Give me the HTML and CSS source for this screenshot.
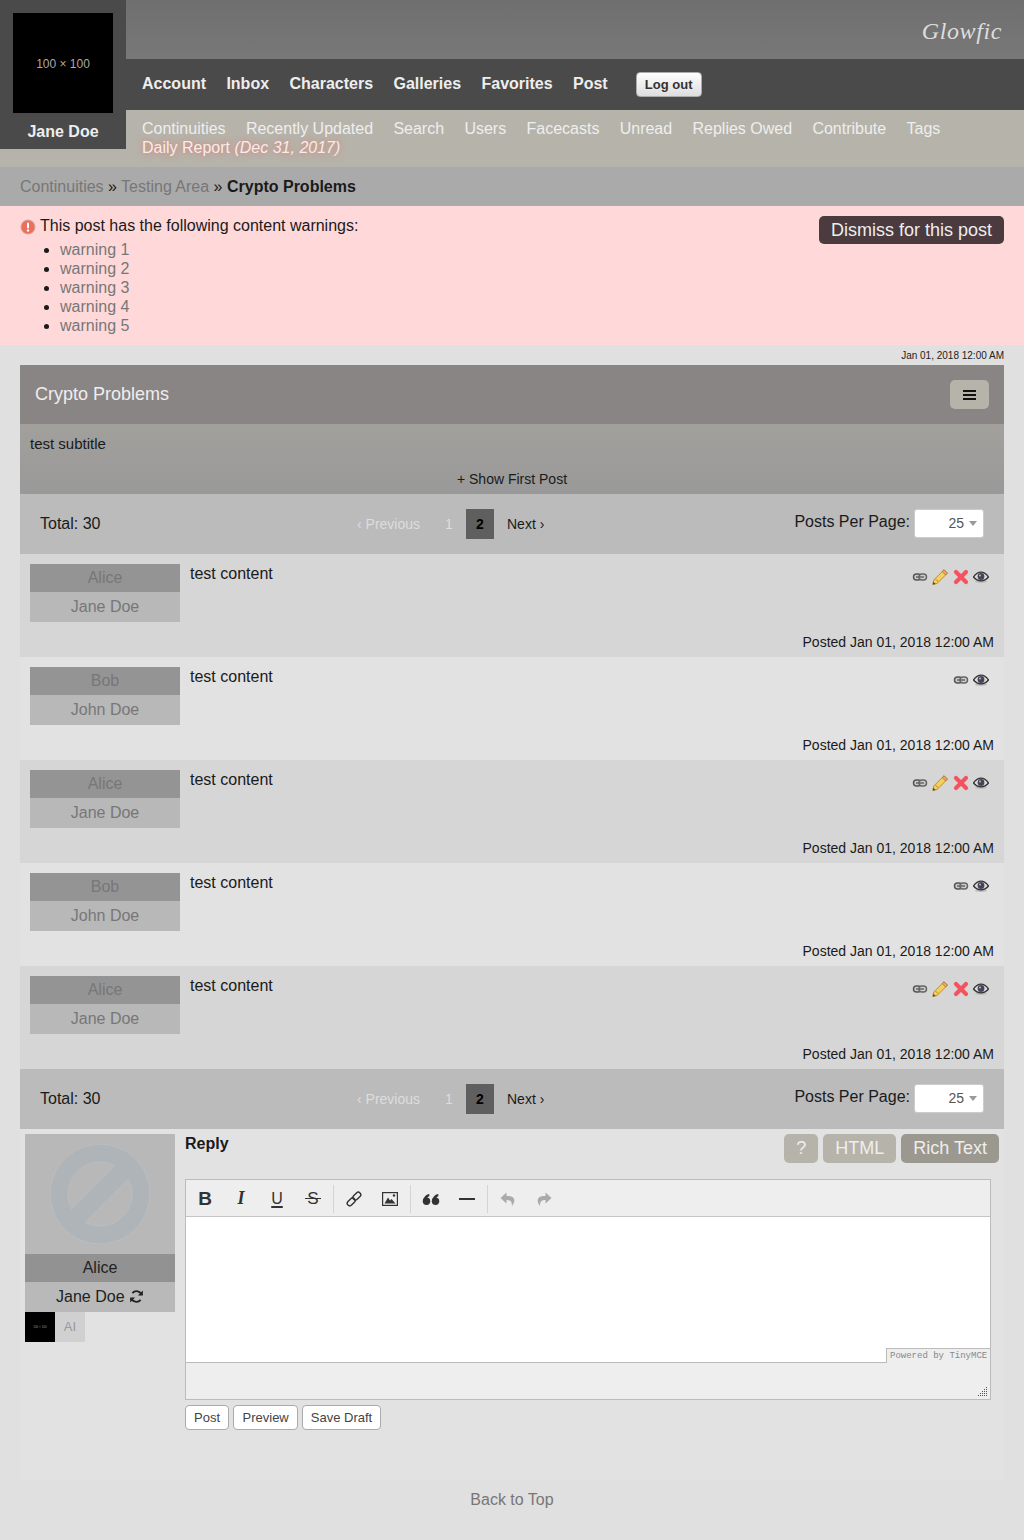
FILE: index.html
```html
<!DOCTYPE html>
<html lang="en">
<head>
<meta charset="utf-8">
<title>Crypto Problems</title>
<link rel="stylesheet" href="styles.css">
</head>
<body>
<svg class="defs" width="0" height="0" aria-hidden="true">
  <symbol id="i-link" viewBox="0 0 16 16">
    <rect x="1.500" y="5" width="7.500" height="6" rx="3" fill="#ccc" stroke="#555" stroke-width="1.500"/>
    <rect x="7" y="5" width="7.500" height="6" rx="3" fill="#ccc" stroke="#666" stroke-width="1.500"/>
    <path d="M4 8h8" stroke="#666" stroke-width="1.500"/>
  </symbol>
  <symbol id="i-pencil" viewBox="0 0 16 16">
    <path d="M12 .8 15.400 4.200 5 14.500 .8 15.500 1.800 11Z" fill="#f4d060" stroke="#b8862a" stroke-width=".9"/>
    <path d="M3.500 10 6.500 13" stroke="#e5a030" stroke-width="1.200"/>
    <path d="M12 .8 15.400 4.200 13.600 6 10.200 2.600Z" fill="#e8a878" stroke="#a8702a" stroke-width=".8"/>
    <path d="M.8 15.500 1.400 12.700 3.600 14.900Z" fill="#444"/>
  </symbol>
  <symbol id="i-x" viewBox="0 0 16 16">
    <path d="M3 3 13 13M13 3 3 13" stroke="#f4525f" stroke-width="4.200" stroke-linecap="round"/>
  </symbol>
  <symbol id="i-eye" viewBox="0 0 16 16">
    <ellipse cx="8" cy="12.500" rx="6" ry="1.500" fill="#bbb"/>
    <path d="M.5 8C3 4.500 5.500 3.200 8 3.200S13 4.500 15.500 8C13 11 10.500 11.800 8 11.800S3 11 .5 8Z" fill="#ddd" stroke="#333" stroke-width="1.300"/>
    <circle cx="8" cy="7.500" r="3.400" fill="#44445a"/>
    <circle cx="7" cy="6.500" r="1" fill="#bbb"/>
  </symbol>
</svg>

<header class="site-head">
  <div class="user-box">
    <div class="avatar">100 × 100</div>
    <div class="user-name">Jane Doe</div>
  </div>
  <div class="top-bar"><span class="logo">Glowfic</span></div>
  <nav class="main-nav">
    <a>Account</a><a>Inbox</a><a>Characters</a><a>Galleries</a><a>Favorites</a><a>Post</a>
    <button class="logout">Log out</button>
  </nav>
  <nav class="sub-nav">
    <a>Continuities</a><a>Recently Updated</a><a>Search</a><a>Users</a><a>Facecasts</a><a>Unread</a><a>Replies Owed</a><a>Contribute</a><a>Tags</a>
    <a class="daily">Daily Report <em>(Dec 31, 2017)</em></a>
  </nav>
</header>

<div class="crumbs"><a>Continuities</a> » <a>Testing Area</a> » <b>Crypto Problems</b></div>

<section class="warning">
  <div>
    <div class="warn-head">
      <svg class="warn-icon" viewBox="0 0 16 16" width="16" height="16"><circle cx="8" cy="8" r="7" fill="#e8705c" stroke="#dba08f" stroke-width="1"/><rect x="7" y="3.500" width="2" height="6" rx="1" fill="#fff"/><circle cx="8" cy="11.500" r="1.200" fill="#fff"/></svg>
      This post has the following content warnings:
    </div>
    <ul class="warn-list">
      <li><a>warning 1</a></li><li><a>warning 2</a></li><li><a>warning 3</a></li><li><a>warning 4</a></li><li><a>warning 5</a></li>
    </ul>
  </div>
  <button class="dismiss">Dismiss for this post</button>
</section>

<main class="content">
  <div class="stamp">Jan 01, 2018 12:00 AM</div>
  <div class="title-bar">
    <span class="title">Crypto Problems</span>
    <button class="menu-btn" aria-label="Menu"><span></span><span></span><span></span></button>
  </div>
  <div class="subtitle-block">
    <div class="subtitle">test subtitle</div>
    <div class="show-first">+ Show First Post</div>
  </div>

  <div class="pager">
    <span class="total">Total: 30</span>
    <div class="pages"><a class="off prev">‹ Previous</a><a class="off one">1</a><b class="cur">2</b><a class="next">Next ›</a></div>
    <div class="ppp">Posts Per Page: <div class="sel">25<i></i></div></div>
  </div>

  <article class="post odd">
    <div class="who"><div class="char">Alice</div><div class="author">Jane Doe</div></div>
    <div class="body">
      <div class="line"><span>test content</span><div class="acts">
        <svg><use href="#i-link"/></svg><svg><use href="#i-pencil"/></svg><svg><use href="#i-x"/></svg><svg><use href="#i-eye"/></svg></div></div>
      <div class="posted">Posted Jan 01, 2018 12:00 AM</div>
    </div>
  </article>
  <article class="post even">
    <div class="who"><div class="char">Bob</div><div class="author">John Doe</div></div>
    <div class="body">
      <div class="line"><span>test content</span><div class="acts">
        <svg><use href="#i-link"/></svg><svg><use href="#i-eye"/></svg></div></div>
      <div class="posted">Posted Jan 01, 2018 12:00 AM</div>
    </div>
  </article>
  <article class="post odd">
    <div class="who"><div class="char">Alice</div><div class="author">Jane Doe</div></div>
    <div class="body">
      <div class="line"><span>test content</span><div class="acts">
        <svg><use href="#i-link"/></svg><svg><use href="#i-pencil"/></svg><svg><use href="#i-x"/></svg><svg><use href="#i-eye"/></svg></div></div>
      <div class="posted">Posted Jan 01, 2018 12:00 AM</div>
    </div>
  </article>
  <article class="post even">
    <div class="who"><div class="char">Bob</div><div class="author">John Doe</div></div>
    <div class="body">
      <div class="line"><span>test content</span><div class="acts">
        <svg><use href="#i-link"/></svg><svg><use href="#i-eye"/></svg></div></div>
      <div class="posted">Posted Jan 01, 2018 12:00 AM</div>
    </div>
  </article>
  <article class="post odd">
    <div class="who"><div class="char">Alice</div><div class="author">Jane Doe</div></div>
    <div class="body">
      <div class="line"><span>test content</span><div class="acts">
        <svg><use href="#i-link"/></svg><svg><use href="#i-pencil"/></svg><svg><use href="#i-x"/></svg><svg><use href="#i-eye"/></svg></div></div>
      <div class="posted">Posted Jan 01, 2018 12:00 AM</div>
    </div>
  </article>

  <div class="pager">
    <span class="total">Total: 30</span>
    <div class="pages"><a class="off prev">‹ Previous</a><a class="off one">1</a><b class="cur">2</b><a class="next">Next ›</a></div>
    <div class="ppp">Posts Per Page: <div class="sel">25<i></i></div></div>
  </div>

  <section class="reply">
    <div class="reply-who">
      <div class="no-icon">
        <svg viewBox="0 0 100 100" width="100" height="100">
          <path fill-rule="evenodd" fill="#afb4b8" stroke="#c8ccd0" stroke-width=".6" stroke-dasharray="1 1" d="M99.700 50A49.700 49.700 0 1 1 .3 50 49.700 49.700 0 1 1 99.700 50ZM78.320 35.120A32 32 0 0 1 35.120 78.320ZM21.680 64.880A32 32 0 0 1 64.880 21.680Z"/>
        </svg>
      </div>
      <div class="reply-char">Alice</div>
      <div class="reply-author">Jane Doe
        <svg class="swap" viewBox="0 0 16 16" width="15" height="15"><path d="M13.500 6.500A5.700 5.700 0 0 0 3.600 4.400M2.500 9.500A5.700 5.700 0 0 0 12.400 11.600" fill="none" stroke="#222" stroke-width="1.900"/><path d="M14.800 1.500V7H9.500ZM1.200 14.500V9H6.500Z" fill="#222"/></svg>
      </div>
      <div class="recent"><div class="thumb">100 × 100</div><div class="ai">AI</div></div>
    </div>
    <div class="reply-main">
      <div class="reply-top">
        <b class="reply-label">Reply</b>
        <div class="modes"><button class="mode">?</button><button class="mode">HTML</button><button class="mode active">Rich Text</button></div>
      </div>
      <div class="editor">
        <div class="toolbar">
          <div class="tgroup">
            <span class="tb t-b">B</span><span class="tb t-i">I</span><span class="tb t-u">U</span><span class="tb t-s">S</span>
          </div>
          <i class="sep"></i>
          <div class="tgroup">
            <span class="tb"><svg viewBox="0 0 16 16" width="16" height="16"><g fill="none" stroke="#333" stroke-width="1.400" transform="rotate(-45 8 8)"><rect x="-.5" y="5.500" width="9" height="5" rx="2.500"/><rect x="7.500" y="5.500" width="9" height="5" rx="2.500"/></g></svg></span>
            <span class="tb"><svg viewBox="0 0 16 16" width="16" height="16"><rect x=".6" y="1.600" width="14.800" height="12.800" fill="none" stroke="#333" stroke-width="1.200"/><path d="M2.500 12.500 6 6.500 8 9.500 9.500 8 13.500 12.500Z" fill="#333"/><circle cx="12" cy="4.500" r="1.200" fill="#333"/></svg></span>
          </div>
          <i class="sep"></i>
          <div class="tgroup">
            <span class="tb"><svg viewBox="0 0 16 16" width="18" height="18"><g fill="#333"><circle cx="4" cy="10" r="3.300"/><circle cx="12" cy="10" r="3.300"/><path d="M1 10C1 6.500 3.500 4 6.500 3.500V5.500C5 6 4.200 7.500 4 9ZM9 10C9 6.500 11.500 4 14.500 3.500V5.500C13 6 12.200 7.500 12 9Z"/></g></svg></span>
            <span class="tb"><svg viewBox="0 0 16 16" width="16" height="16"><rect x="0" y="7" width="16" height="2" fill="#333"/></svg></span>
          </div>
          <i class="sep"></i>
          <div class="tgroup">
            <span class="tb"><svg viewBox="0 0 16 16" width="16" height="16"><path d="M6.500 1.500 .5 7l6 5.500V9c4 0 5.500 1.500 5.500 6 2.500-3 3-6 1.500-8C12.500 5.500 10 5 6.500 5Z" fill="#aaa"/></svg></span>
            <span class="tb"><svg viewBox="0 0 16 16" width="16" height="16"><path d="M9.500 1.500 15.500 7l-6 5.500V9c-4 0-5.500 1.500-5.500 6-2.500-3-3-6-1.500-8C3.500 5.500 6 5 9.500 5Z" fill="#aaa"/></svg></span>
          </div>
        </div>
        <div class="edit-area"><span class="powered">Powered by TinyMCE</span></div>
        <div class="status">
          <svg class="grip" viewBox="0 0 10 10" width="10" height="10"><g fill="#555"><rect x="8" y="0" width="1" height="1"/><rect x="6" y="2" width="1" height="1"/><rect x="8" y="2" width="1" height="1"/><rect x="4" y="4" width="1" height="1"/><rect x="6" y="4" width="1" height="1"/><rect x="8" y="4" width="1" height="1"/><rect x="2" y="6" width="1" height="1"/><rect x="4" y="6" width="1" height="1"/><rect x="6" y="6" width="1" height="1"/><rect x="8" y="6" width="1" height="1"/><rect x="0" y="8" width="1" height="1"/><rect x="2" y="8" width="1" height="1"/><rect x="4" y="8" width="1" height="1"/><rect x="6" y="8" width="1" height="1"/><rect x="8" y="8" width="1" height="1"/></g></svg>
        </div>
      </div>
      <div class="actions"><button class="act">Post</button><button class="act wide">Preview</button><button class="act tight">Save Draft</button></div>
    </div>
  </section>
</main>

<footer class="back"><a>Back to Top</a></footer>
</body>
</html>
```

FILE: styles.css
```css
* { box-sizing: border-box; }
html, body { margin: 0; padding: 0; }
body { background: #e0e0e0; font-family: "Liberation Sans", Arial, sans-serif; font-size: 16px; color: #1a1a1a; height: 1540px; overflow: hidden; }
.defs { position: absolute; }
button { font-family: inherit; cursor: pointer; }

.site-head { position: relative; }
.user-box { position: absolute; left: 0; top: 0; width: 126px; height: 149px; background: #4a4a4a; }
.avatar { width: 100px; height: 100px; margin: 13px 0 0 13px; padding-top: 2px; background: #000; color: #aaa; font-size: 12px; display: flex; align-items: center; justify-content: center; }
.user-name { color: #eee; font-weight: bold; text-align: center; margin-top: 10px; line-height: 18px; }
.top-bar { height: 59px; background: linear-gradient(#6f6f6f, #787878); display: flex; justify-content: flex-end; align-items: center; padding: 3px 22px 0 0; }
.logo { font-family: "Liberation Serif", serif; font-style: italic; font-size: 24px; color: #ddd; line-height: 30px; letter-spacing: .6px; }
.main-nav { height: 51px; background: #4a4a4a; padding-left: 142px; display: flex; align-items: center; gap: 20.4px; color: #eee; font-weight: bold; }
.main-nav a { position: relative; top: -1px; }
.logout { margin-left: 7.6px; width: 66px; height: 25px; padding: 0; border: 1px solid #aaa; border-radius: 4px; background: linear-gradient(#fff, #ddd); color: #333; font-size: 13px; font-weight: bold; }
.sub-nav { height: 57px; background: #b6b3aa; padding: 9px 0 0 142px; display: flex; flex-wrap: wrap; column-gap: 20.3px; align-content: flex-start; color: #eee; line-height: 19px; }
.daily { text-shadow: 0 0 6px #e8736a; color: #f6ece8; }
.crumbs { height: 39px; background: #aaa; padding-left: 20px; line-height: 39px; }
.crumbs a { color: #777; }
.warning { height: 139px; background: #ffd9d9; padding: 10px 20px 0; display: flex; justify-content: space-between; align-items: flex-start; }
.warn-head { display: flex; align-items: center; gap: 4px; line-height: 19px; margin-bottom: 5px; }
.warn-icon { flex: none; position: relative; top: 1px; }
.warn-list { margin: 0; padding: 0 0 0 40px; line-height: 19px; }
.warn-list a { color: #777; }
.dismiss { width: 185px; height: 28px; padding: 0; border: 0; border-radius: 5px; background: #4b3a3e; color: #eee; font-size: 18px; }

.content { margin: 0 20px; }
.stamp { height: 20px; text-align: right; font-size: 10px; line-height: 22px; color: #222; }
.title-bar { height: 59px; background: #8a8585; display: flex; align-items: center; justify-content: space-between; padding: 0 15px; }
.title { font-size: 18px; color: #eee; }
.menu-btn { width: 39px; height: 29px; padding: 0; border: 0; border-radius: 5px; background: #b6b3aa; display: flex; flex-direction: column; align-items: center; justify-content: center; gap: 2px; }
.menu-btn span { width: 13px; height: 2px; background: #111; }
.subtitle-block { height: 70px; background: linear-gradient(#a2a09c, #999); font-size: 14px; }
.subtitle { padding: 12px 0 0 10px; line-height: 16px; font-size: 15px; }
.show-first { text-align: center; margin-top: 19px; line-height: 16px; }

.pager { height: 60px; background: #bbb; display: flex; align-items: center; padding: 0 20px; }
.total { width: 317px; }
.pages { display: flex; align-items: center; font-size: 14px; }
.pages .prev { width: 88px; }
.pages .one { width: 21px; }
.off { color: #ddd; }
.cur { width: 28px; height: 30px; background: #5f5f5f; color: #000; text-align: center; line-height: 30px; }
.next { margin-left: 13px; }
.ppp { margin-left: auto; display: flex; align-items: center; gap: 4px; position: relative; top: -2px; }
.sel { width: 70px; height: 29px; background: #fff; border: 1px solid #ccc; border-radius: 3px; font-size: 14px; color: #555; display: flex; align-items: center; justify-content: flex-end; gap: 5px; padding-right: 6px; position: relative; top: 1px; }
.sel i { width: 0; height: 0; border-left: 4px solid transparent; border-right: 4px solid transparent; border-top: 5px solid #999; }

.post { height: 103px; padding: 10px 10px 7px; display: flex; gap: 10px; }
.odd { background: #d6d6d6; }
.even { background: #e2e2e2; }
.who { width: 150px; flex: none; text-align: center; color: #777; }
.char { height: 28px; line-height: 28px; background: #949494; }
.author { height: 30px; line-height: 30px; background: #b8b8b8; }
.body { flex: 1; display: flex; flex-direction: column; }
.line { display: flex; justify-content: space-between; align-items: flex-start; line-height: 19px; }
.acts { display: flex; gap: 4.5px; padding: 5px 5px 0 0; }
.acts svg { width: 16px; height: 16px; display: block; }
.posted { margin-top: auto; text-align: right; font-size: 14px; line-height: 16px; }

.reply { height: 351px; background: #e2e2e2; padding: 5px 5px 0; display: flex; gap: 10px; }
.reply-who { width: 150px; flex: none; text-align: center; }
.no-icon { height: 120px; background: #b8b8b8; display: flex; align-items: center; justify-content: center; }
.no-icon svg { display: block; }
.reply-char { height: 28px; line-height: 28px; background: #929292; color: #222; }
.reply-author { height: 30px; line-height: 30px; background: #b9b9b9; color: #222; }
.swap { vertical-align: -2px; }
.recent { display: flex; }
.thumb { width: 30px; height: 30px; background: #000; color: #999; font-size: 3px; display: flex; align-items: center; justify-content: center; }
.ai { width: 30px; height: 30px; background: #d0d0d0; color: #999; font-size: 13px; line-height: 30px; }
.reply-main { flex: 1; min-width: 0; }
.reply-top { height: 45px; display: flex; justify-content: space-between; align-items: flex-start; }
.reply-label { line-height: 19px; }
.modes { display: flex; gap: 5px; }
.mode { height: 29px; padding: 0 12px; border: 0; border-radius: 5px; background: #b6b3aa; color: #eee; font-size: 18px; }
.mode.active { background: #9b988f; }
.editor { width: 806px; height: 221px; border: 1px solid #bbb; background: #eee; display: flex; flex-direction: column; }
.toolbar { height: 37px; flex: none; padding: 1px 0 0 1px; display: flex; align-items: center; border-bottom: 1px solid #c4c4c4; }
.tgroup { display: flex; }
.tb { width: 36px; height: 28px; display: flex; align-items: center; justify-content: center; color: #333; font-size: 18px; position: relative; }
.t-b { font-weight: bold; font-size: 19px; }
.t-i { font-style: italic; font-weight: bold; font-family: "Liberation Serif", serif; }
.t-u { text-decoration: underline; text-decoration-thickness: 2px; text-underline-offset: 2px; font-size: 16px; }
.t-s { font-size: 17px; }
.t-s::after { content: ""; position: absolute; left: 10px; top: 13px; width: 16px; height: 1px; background: #333; }
.sep { width: 1px; height: 28px; margin: 0 2px; background: #d4d4d4; }
.edit-area { height: 146px; flex: none; background: #fff; border-bottom: 1px solid #bbb; display: flex; justify-content: flex-end; align-items: flex-end; }
.powered { width: 104px; height: 15px; margin-bottom: -1px; background: #eee; border: 1px solid #bbb; border-right: 0; border-bottom: 0; font-family: "Liberation Mono", monospace; font-size: 9px; line-height: 14px; color: #888; padding-left: 3px; white-space: nowrap; }
.status { flex: 1; display: flex; justify-content: flex-end; align-items: flex-end; padding: 0 2px 2px 0; }
.grip { display: block; }
.actions { display: flex; gap: 4px; margin-top: 5px; }
.act { height: 25px; padding: 0 8px; border: 1px solid #aaa; border-radius: 4px; background: #fff; color: #444; font-size: 13px; }
.act.wide { padding: 0 8.5px; }
.act.tight { padding: 0 7.5px; }

.back { text-align: center; color: #777; line-height: 18px; padding-top: 11px; }
```
